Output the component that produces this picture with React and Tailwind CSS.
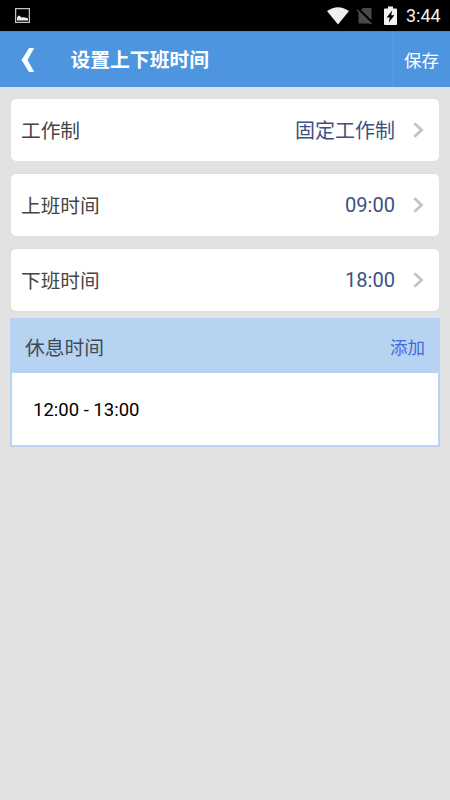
const Chevron = () => (
  <svg className="ml-[18px] block h-4 w-[11px]" viewBox="0 0 11 16" fill="none" stroke="#c4c4c4" strokeWidth="2.8">
    <path d="M1.3 1.2 8.6 8 1.3 14.8" />
  </svg>
);

const Row = ({ label, value, valueClass }) => (
  <div className="flex h-[62px] items-center rounded-[5px] bg-white pr-[15px] pl-[10px] shadow-[0_0_1px_1px_rgba(0,0,0,0.015)]">
    <span className="flex-1 pt-[3px] text-[19.7px] leading-7 text-[#444]">{label}</span>
    <span className={`leading-7 text-[#3d5183] ${valueClass}`}>{value}</span>
    <Chevron />
  </div>
);

const StatusBar = () => (
  <div className="flex h-[31px] items-center bg-black pr-[10px] pl-[15px]">
    <svg className="block h-[15px] w-[15px]" viewBox="0 0 15 15">
      <rect x="0.6" y="0.6" width="13.8" height="13.8" fill="none" stroke="#c4c4c4" strokeWidth="1.3" />
      <path d="M2 12.5V9.500L3.500 7.500l1.500.5 1 1.200 1.500.3 1.500-.5 1.500.9 1-.5 1.500 1.300v1.800z" fill="#eee" />
    </svg>
    <div className="flex-1" />
    <svg className="block h-[18px] w-[22px]" viewBox="0 0 22 18">
      <path d="M0 4.1Q11-3.7 22 4.1L11 17.6z" fill="#efefef" />
    </svg>
    <svg className="ml-[7px] block h-[18px] w-[18px]" viewBox="0 0 18 18">
      <path d="M7 1h8.500v15.500H2.500V5.500z" fill="#4a4a4a" />
      <path d="M1.500 1.500 16.500 16" stroke="#000" strokeWidth="3" />
      <path d="M1 2.800 15.500 17" stroke="#4a4a4a" strokeWidth="1.500" />
    </svg>
    <svg className="ml-[10px] block h-[19px] w-[13px]" viewBox="0 0 13 19">
      <path d="M4 .5h5v2h3q1 0 1 1V18q0 1-1 1H1q-1 0-1-1V3.500q0-1 1-1h3z" fill="#f2f2f2" />
      <path d="M8.200 4.500 2.600 11.500h3.100l-.9 5.100 5.600-7.300H7.200z" fill="#000" />
    </svg>
    <span className="ml-[9px] w-[34px] whitespace-nowrap pt-px text-[17.900px] leading-5 text-[#f2f2f2]">3:44</span>
  </div>
);

export default function App() {
  return (
    <div className="h-[800px] w-[450px] overflow-hidden bg-[#e2e2e2] font-[Roboto,'Noto_Sans_CJK_SC',sans-serif]">
      <StatusBar />
      <header className="flex h-14 items-center border-t border-[#4489d2] bg-[#4e95e0] text-white">
        <div className="flex h-full w-[58px] items-center border-r border-[#5794d8] pl-[21px]">
          <svg className="block h-[24px] w-[14px]" viewBox="0 0 14 24">
            <path d="M8 0h5.200L6.600 12l6.600 12H8L.5 12z" fill="#f4fdff" />
          </svg>
        </div>
        <h1 className="flex-1 pt-[2px] pl-[12.500px] text-[19.800px] leading-7 font-bold">设置上下班时间</h1>
        <div className="flex h-full w-[57px] items-center border-l border-[#609fdf] pt-[3px] pl-[10px] text-[17.400px]">
          <button className="whitespace-nowrap">保存</button>
        </div>
      </header>
      <main className="px-[11px] pt-3">
        <div className="flex flex-col gap-[13px]">
          <Row label="工作制" value="固定工作制" valueClass="pt-[2px] text-[20px]" />
          <Row label="上班时间" value="09:00" valueClass="text-[20.100px]" />
          <Row label="下班时间" value="18:00" valueClass="text-[20.100px]" />
        </div>
        <section className="-mx-px mt-[7px] h-[129px] border-2 border-[#b6d3f2] bg-white">
          <div className="flex h-[53px] items-center justify-between bg-[#b6d3f2] pr-[13px] pl-[13px]">
            <span className="pt-[5px] text-[19.800px] leading-7 text-[#414b56]">休息时间</span>
            <button className="pt-[3px] text-[17.500px] leading-7 text-[#456bd6]">添加</button>
          </div>
          <div className="flex h-[72px] items-center pt-[3px] pl-[21px] text-[18.500px] text-black">12:00 - 13:00</div>
        </section>
      </main>
    </div>
  );
}
